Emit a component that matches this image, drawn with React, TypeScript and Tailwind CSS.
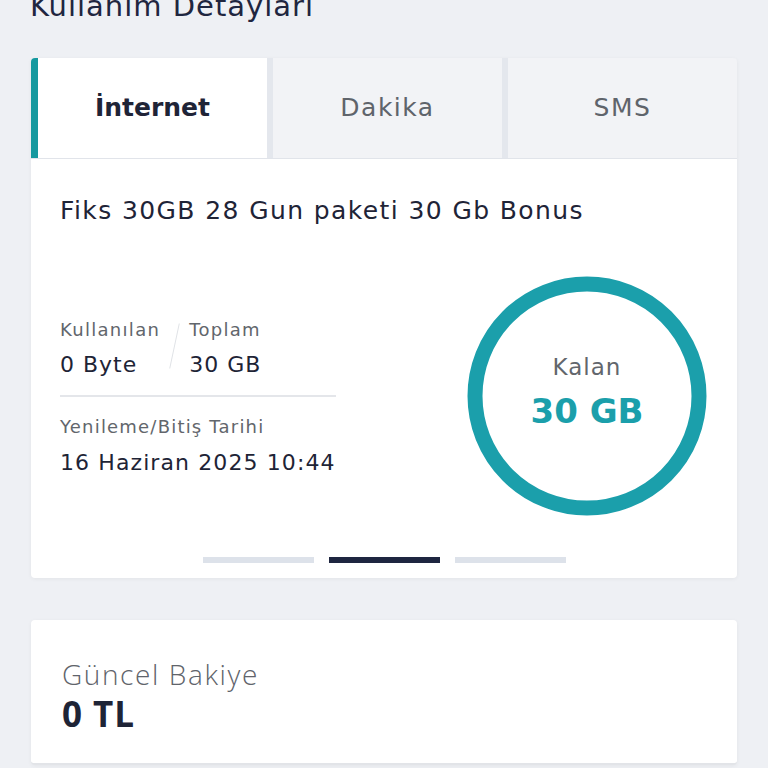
import React from "react";

const tabs = ["İnternet", "Dakika", "SMS"];

const UsageRing = () => {
  // remaining quota ring, full because nothing was used
  return (
    <div className="relative w-[240px] h-[240px] mr-[1px]">
      <svg width="240" height="240" viewBox="0 0 240 240" className="absolute inset-0">
        <circle cx="120" cy="120" r="112" fill="none" stroke="#1b9fab" strokeWidth="15" />
      </svg>
      <div className="absolute inset-0 flex flex-col items-center justify-center pb-[8px]">
        <span className="text-[23px] leading-[30px] tracking-[1px] text-[#62666c]">Kalan</span>
        <span className="text-[34px] leading-[44px] font-bold text-[#1b9fab] mt-[7px]">30 GB</span>
      </div>
    </div>
  );
};

const App = () => {
  const active = 0;

  return (
    <div
      className="w-[768px] h-[768px] overflow-hidden bg-[#eef0f4] text-[#1e2436]"
      style={{ fontFamily: '"DejaVu Sans", "Noto Sans", sans-serif' }}
    >
      <h1 className="mt-[-14px] ml-[30px] text-[29px] leading-[40px] tracking-[1px] text-[#1f2640]">
        Kullanım Detayları
      </h1>

      <div className="mx-[31px] mt-[32px] bg-white rounded-[4px] shadow-[0_1px_4px_rgba(0,0,0,0.05)] overflow-hidden">
        {/* tab strip */}
        <div className="flex gap-[6px] bg-[#e4e7ed] border-b border-[#e1e4ea]">
          {tabs.map((t, i) => (
            <div
              key={t}
              className={
                i === active
                  ? "flex-1 h-[100px] flex items-center justify-center bg-white border-l-[7px] border-[#16999f] text-[25px] font-bold text-[#1f2437]"
                  : "flex-1 h-[100px] flex items-center justify-center bg-[#f2f3f6] text-[25px] tracking-[1.5px] text-[#5f646b]"
              }
            >
              {t}
            </div>
          ))}
        </div>

        <div className="px-[29px] pt-[34px]">
          <div className="text-[25px] leading-[36px] tracking-[1.4px] text-[#1f2437]">
            Fiks 30GB 28 Gun paketi 30 Gb Bonus
          </div>

          <div className="flex items-center justify-between mt-[47px]">
            <div className="w-[276px] mt-[4px]">
              <div className="flex items-start">
                <div>
                  <div className="text-[18px] leading-[26px] tracking-[1.3px] text-[#62666c]">Kullanılan</div>
                  <div className="text-[22px] leading-[32px] tracking-[1px] mt-[6px]">0 Byte</div>
                </div>
                <div className="w-[1px] h-[46px] bg-[#dfe2e6] rotate-[12deg] mx-[14px] mt-[6px]" />
                <div>
                  <div className="text-[18px] leading-[26px] tracking-[1.3px] text-[#62666c]">Toplam</div>
                  <div className="text-[22px] leading-[32px] tracking-[1px] mt-[6px]">30 GB</div>
                </div>
              </div>
              <div className="h-[2px] bg-[#e4e6ea] mt-[14px]" />
              <div className="text-[18px] leading-[26px] tracking-[1.2px] text-[#62666c] mt-[17px]">
                Yenileme/Bitiş Tarihi
              </div>
              <div className="text-[22px] leading-[32px] tracking-[1.1px] mt-[7px]">16 Haziran 2025 10:44</div>
            </div>
            <UsageRing />
          </div>

          {/* pager */}
          <div className="flex justify-center gap-[15px] mt-[41px] pb-[15px]">
            <div className="w-[111px] h-[6px] bg-[#dde2ea]" />
            <div className="w-[111px] h-[6px] bg-[#1e2640]" />
            <div className="w-[111px] h-[6px] bg-[#dde2ea]" />
          </div>
        </div>
      </div>

      <div className="mx-[31px] mt-[42px] bg-white rounded-[4px] shadow-[0_1px_4px_rgba(0,0,0,0.05)] h-[145px] border-b-2 border-[#e2e4e8] px-[31px] pt-[38px]">
        <div
          className="text-[28px] leading-[32px] text-[#5f646b] tracking-[1.6px]"
          style={{ fontFamily: '"Open Sans", "Noto Sans", sans-serif', fontWeight: 300 }}
        >
          Güncel Bakiye
        </div>
        <div
          className="text-[35px] leading-[42px] font-bold tracking-[1px] text-[#1e2436] mt-[3px]"
          style={{ fontFamily: '"Open Sans", "Noto Sans", sans-serif' }}
        >
          0 TL
        </div>
      </div>
    </div>
  );
};

export default App;
